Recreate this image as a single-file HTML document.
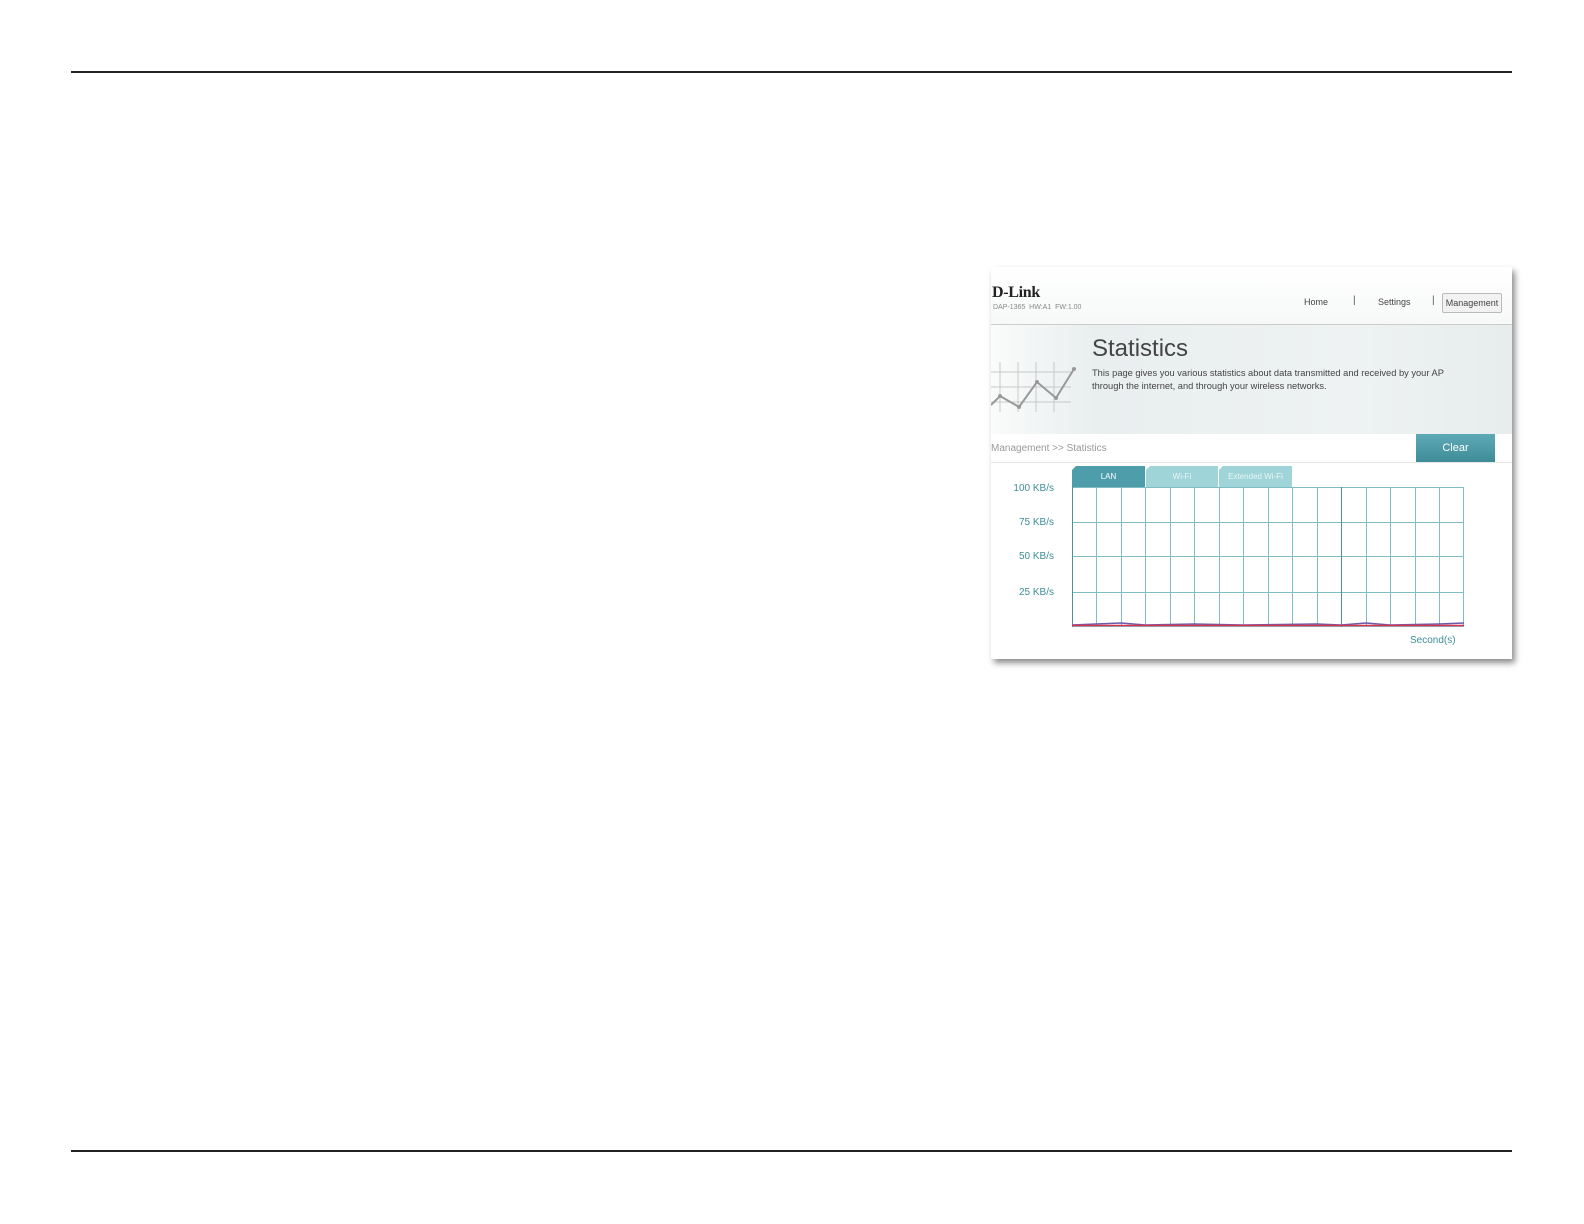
<!DOCTYPE html>
<html><head><style>
body{margin:0;width:1584px;height:1224px;background:#fff;position:relative;font-family:"Liberation Sans",sans-serif;overflow:hidden}
.a{position:absolute}
</style></head><body>
<div class="a" style="left:71px;top:71px;width:1441px;height:2px;background:#222"></div>
<div class="a" style="left:71px;top:1150px;width:1441px;height:2px;background:#222"></div>

<div class="a" style="left:991px;top:267px;width:521px;height:392px;background:#fff;box-shadow:3px 4px 6px rgba(0,0,0,0.45);overflow:hidden">
  <div class="a" style="left:0;top:0;width:521px;height:57px;background:linear-gradient(#fff,#f7f8f8)"></div>
  <div class="a" style="left:1px;top:17px;font:bold 16px 'Liberation Serif',serif;color:#222;letter-spacing:-0.3px">D-Link</div>
  <div class="a" style="left:2px;top:37px;font-size:7px;color:#888">DAP-1365 &nbsp;HW:A1 &nbsp;FW:1.00</div>
  <div class="a" style="left:313px;top:30px;font-size:9px;color:#444">Home</div>
  <div class="a" style="left:362px;top:28px;font-size:10px;color:#555">|</div>
  <div class="a" style="left:387px;top:30px;font-size:9px;color:#444">Settings</div>
  <div class="a" style="left:441px;top:28px;font-size:10px;color:#555">|</div>
  <div class="a" style="left:451px;top:26px;width:58px;height:18px;border:1px solid #bbb;border-radius:2px;background:#f2f2f2;font-size:9px;color:#444;line-height:18px;text-align:center">Management</div>
  <div class="a" style="left:0;top:57px;width:521px;height:110px;background:linear-gradient(90deg,#fafbfb 0%,#e9eeef 20%,#eef2f2 70%,#e7ecec 100%);border-top:1px solid #ccc"></div>
  <svg class="a" style="left:0;top:90px" width="90" height="60">
    <g stroke="#c8c8c8" stroke-width="1"><line x1="0" y1="15" x2="80" y2="15"/><line x1="0" y1="30" x2="80" y2="30"/><line x1="0" y1="45" x2="80" y2="45"/><line x1="9" y1="5" x2="9" y2="55"/><line x1="27" y1="5" x2="27" y2="55"/><line x1="45" y1="5" x2="45" y2="55"/><line x1="63" y1="5" x2="63" y2="55"/></g>
    <polyline points="0,48 9,39 28,50 46,25 65,41 83,12" fill="none" stroke="#999" stroke-width="2"/>
    <g fill="#999"><circle cx="9" cy="39" r="2"/><circle cx="28" cy="50" r="2"/><circle cx="46" cy="25" r="2"/><circle cx="65" cy="41" r="2"/><circle cx="83" cy="12" r="2"/></g>
  </svg>
  <div class="a" style="left:101px;top:68px;font-size:24px;color:#444">Statistics</div>
  <div class="a" style="left:101px;top:100px;font-size:9.3px;line-height:13px;color:#444">This page gives you various statistics about data transmitted and received by your AP<br>through the internet, and through your wireless networks.</div>
  <div class="a" style="left:0;top:167px;width:521px;height:28px;background:#fff;border-bottom:1px solid #e6e6e6"></div>
  <div class="a" style="left:0;top:176px;font-size:10px;color:#999">Management &gt;&gt; Statistics</div>
  <div class="a" style="left:425px;top:167px;width:79px;height:28px;background:linear-gradient(#5ea9b5,#3f8d9a);color:#fff;font-size:11px;line-height:28px;text-align:center">Clear</div>
  <div class="a" style="left:81px;top:199px;width:73px;height:21px;background:#4e9dab;color:#fff;font-size:8px;line-height:21px;text-align:center;clip-path:polygon(4px 0,100% 0,100% 100%,0 100%,0 4px)">LAN</div>
  <div class="a" style="left:155px;top:199px;width:72px;height:21px;background:#9fd4d9;color:#e9f6f7;font-size:8px;line-height:21px;text-align:center;clip-path:polygon(4px 0,100% 0,100% 100%,0 100%,0 4px)">Wi-Fi</div>
  <div class="a" style="left:228px;top:199px;width:73px;height:21px;background:#9fd4d9;color:#e9f6f7;font-size:8px;line-height:21px;text-align:center;clip-path:polygon(4px 0,100% 0,100% 100%,0 100%,0 4px)">Extended Wi-Fi</div>
  <div class="a" style="right:458px;top:216px;font-size:10px;color:#3f8d9a;text-align:right;width:60px">100 KB/s</div>
  <div class="a" style="right:458px;top:250px;font-size:10px;color:#3f8d9a;text-align:right;width:60px">75 KB/s</div>
  <div class="a" style="right:458px;top:284px;font-size:10px;color:#3f8d9a;text-align:right;width:60px">50 KB/s</div>
  <div class="a" style="right:458px;top:320px;font-size:10px;color:#3f8d9a;text-align:right;width:60px">25 KB/s</div>
  <svg class="a" style="left:81px;top:220px" width="396" height="142">
    <g stroke="#7fbcc3" stroke-width="1" fill="none">
      <rect x="0.5" y="0.5" width="391" height="139"/>
      <line x1="0" y1="35.5" x2="392" y2="35.5"/><line x1="0" y1="69.5" x2="392" y2="69.5"/><line x1="0" y1="105.5" x2="392" y2="105.5"/>
      <line x1="24.5" y1="0" x2="24.5" y2="140"/><line x1="49.5" y1="0" x2="49.5" y2="140"/><line x1="73.5" y1="0" x2="73.5" y2="140"/><line x1="98.5" y1="0" x2="98.5" y2="140"/><line x1="122.5" y1="0" x2="122.5" y2="140"/><line x1="147.5" y1="0" x2="147.5" y2="140"/><line x1="171.5" y1="0" x2="171.5" y2="140"/><line x1="196.5" y1="0" x2="196.5" y2="140"/><line x1="220.5" y1="0" x2="220.5" y2="140"/><line x1="245.5" y1="0" x2="245.5" y2="140"/><line x1="294.5" y1="0" x2="294.5" y2="140"/><line x1="318.5" y1="0" x2="318.5" y2="140"/><line x1="343.5" y1="0" x2="343.5" y2="140"/><line x1="367.5" y1="0" x2="367.5" y2="140"/>
    </g>
    <line x1="0.5" y1="0" x2="0.5" y2="140" stroke="#4e8f99"/>
    <line x1="269.5" y1="0" x2="269.5" y2="140" stroke="#4e8f99"/>
    <polyline points="0,138 24,137 49,136 73,138 122,137 171,138 245,137 269,138 294,136 318,138 367,137 392,136" fill="none" stroke="#6a5aa8" stroke-width="1.5"/>
    <line x1="0" y1="138.5" x2="392" y2="138.5" stroke="#e0304a" stroke-width="1.5"/>
  </svg>
  <div class="a" style="left:419px;top:368px;font-size:10px;color:#3f8d9a">Second(s)</div>
</div>
</body></html>
